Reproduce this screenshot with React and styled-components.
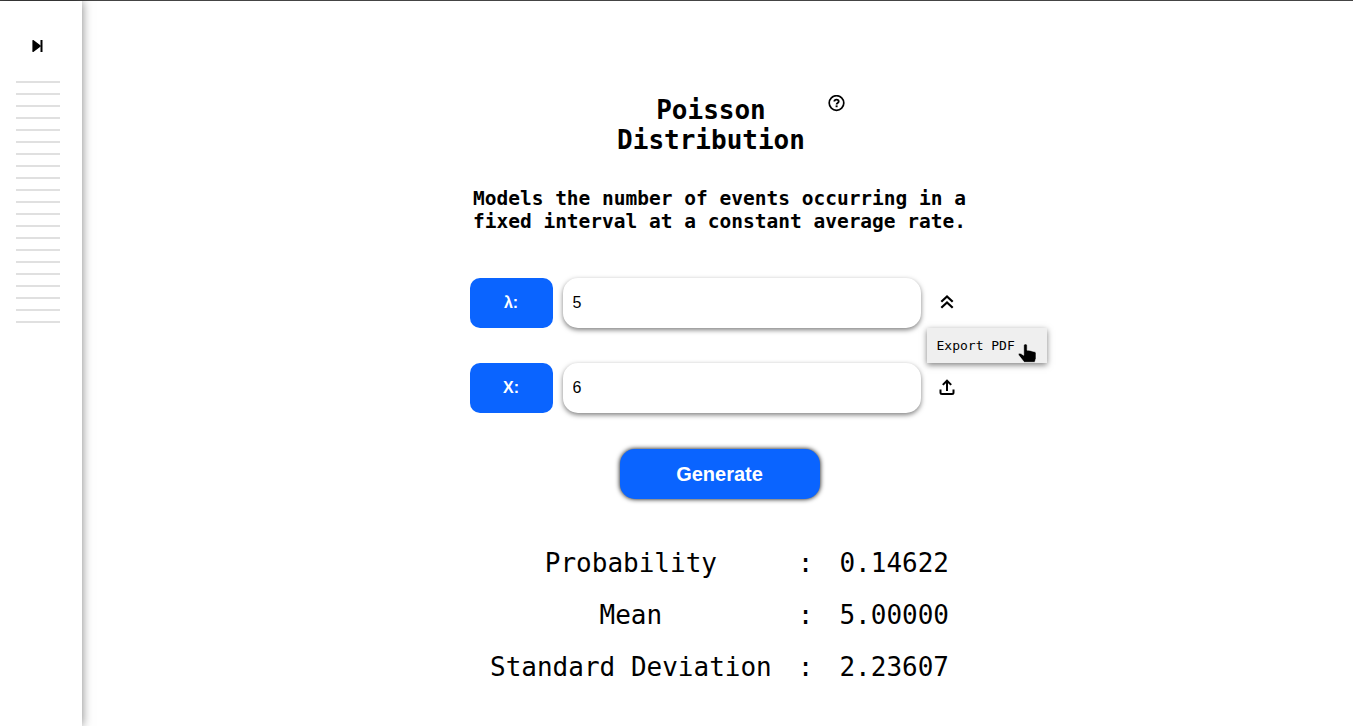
import { useState } from "react";
import styled, { createGlobalStyle } from "styled-components";

const results = [
  { label: "Probability", value: "0.14622" },
  { label: "Mean", value: "5.00000" },
  { label: "Standard Deviation", value: "2.23607" },
];

const slots = Array.from({ length: 21 }, (_, i) => i);

export default function App() {
  const [lambda, setLambda] = useState("5");
  const [x, setX] = useState("6");

  return (
    <>
      <GlobalStyle />
      <Page>
        <Sidebar>
          <IconButton aria-label="Open menu">
            <svg width="12" height="12" viewBox="0 0 12 12">
              <path d="M1 0.6v10.8L8.300 6z" fill="#000" stroke="#000" strokeWidth="1.200" strokeLinejoin="round" />
              <path d="M9.500 0v12" stroke="#000" strokeWidth="2" />
            </svg>
          </IconButton>
          <SlotList>
            {slots.map((slot) => (
              <Slot key={slot} />
            ))}
          </SlotList>
        </Sidebar>

        <Main>
          <TitleRow>
            <Title>Poisson Distribution</Title>
            <IconButton aria-label="Help">
              <svg width="17" height="17" viewBox="0 0 17 17" fill="none" stroke="#000">
                <circle cx="8.5" cy="8" r="7.3" strokeWidth="1.7" />
                <path d="M6.3 6.5C6.4 5.200 7.3 4.600 8.5 4.600s2.2.7 2.2 1.800c0 1.500-2.1 1.500-2.1 3" strokeWidth="1.800" />
                <path d="M8.6 10.400v1.800" strokeWidth="2" />
              </svg>
            </IconButton>
          </TitleRow>

          <Description>
            Models the number of events occurring in a fixed interval at a constant average rate.
          </Description>

          <Form onSubmit={(e) => e.preventDefault()}>
            <Fields>
              <Field>
                <FieldLabel htmlFor="lambda">λ:</FieldLabel>
                <FieldInput id="lambda" value={lambda} onChange={(e) => setLambda(e.target.value)} />
                <FieldAction>
                  <IconButton type="button" aria-label="Close export menu">
                    <svg width="18" height="18" viewBox="0 0 18 18" fill="none" stroke="#000" strokeWidth="2.2">
                      <path d="M3.300 7.800L9 2.400l5.700 5.400M3.300 13.800L9 8.400l5.700 5.400" />
                    </svg>
                  </IconButton>
                  <ExportMenu type="button">
                    Export PDF
                    <Pointer width="20" height="20" viewBox="0 0 20 20">
                      <path
                        d="M8.500 1c1 0 1.700.7 1.700 1.600v4.600h1.800l6 1.600c.8.3 1 .9 1 1.700v5l-1.200 3.800H7.200L1.300 11.800c-.2-1.300 1.400-2 2.700-1.200l2.700 1.700V2.600C6.700 1.700 7.500 1 8.500 1z"
                        fill="#000"
                        stroke="#fff"
                        strokeWidth="0.6"
                      />
                    </Pointer>
                  </ExportMenu>
                </FieldAction>
              </Field>
              <Field>
                <FieldLabel htmlFor="x">X:</FieldLabel>
                <FieldInput id="x" value={x} onChange={(e) => setX(e.target.value)} />
                <FieldAction>
                  <IconButton type="button" aria-label="Export">
                    <svg width="18" height="18" viewBox="0 0 18 18" fill="none" stroke="#000" strokeWidth="2">
                      <path d="M9 12V2M4.800 5.900L9 1.700l4.200 4.200M2.500 10.500v3c0 1 .5 1.500 1.500 1.500h10c1 0 1.500-.5 1.500-1.500v-3" />
                    </svg>
                  </IconButton>
                </FieldAction>
              </Field>
            </Fields>
            <GenerateButton>Generate</GenerateButton>
          </Form>

          <Results>
            <tbody>
              {results.map(({ label, value }) => (
                <tr key={label}>
                  <ResultCell as="th" scope="row">{label}</ResultCell>
                  <ResultCell>:</ResultCell>
                  <ResultCell>{value}</ResultCell>
                </tr>
              ))}
            </tbody>
          </Results>
        </Main>
      </Page>
    </>
  );
}

const GlobalStyle = createGlobalStyle`
  * {
    box-sizing: border-box;
  }

  body {
    margin: 0;
    background-color: #fff;
    color: #000;
    font-family: "DejaVu Sans Mono", monospace;
    font-size: 13px;
  }
`;

const Page = styled.div`
  display: flex;
  min-height: 100vh;
  border-top: 1px solid #444;
`;

const Sidebar = styled.aside`
  display: flex;
  flex-direction: column;
  flex: 0 0 82px;
  padding: 39px 22px 0 16px;
  box-shadow: 0 0 10px rgba(0, 0, 0, 0.5);
`;

const IconButton = styled.button`
  display: flex;
  align-items: center;
  justify-content: center;
  padding: 0;
  border: none;
  background: none;
  cursor: pointer;
`;

const SlotList = styled.div`
  display: flex;
  flex-direction: column;
  gap: 10px;
  margin-top: 29px;
`;

const Slot = styled.hr`
  width: 100%;
  height: 2px;
  margin: 0;
  border: none;
  background-color: #e0e0e0;
`;

const Main = styled.main`
  display: flex;
  flex: 1;
  flex-direction: column;
  align-items: center;
  padding: 94px 0 32px 4px;
`;

const TitleRow = styled.header`
  display: flex;
  align-items: flex-start;
  width: 250px;
`;

const Title = styled.h1`
  flex: 1;
  margin: 0;
  font-size: 2em;
  line-height: 30px;
  text-align: center;
`;

const Description = styled.h2`
  width: 500px;
  margin: 32px 0 0;
  font-size: 1.5em;
  line-height: 23px;
  text-align: center;
`;

const Form = styled.form`
  display: flex;
  flex-direction: column;
  align-items: center;
  gap: 36px;
  width: 500px;
  margin-top: 45px;
`;

const Fields = styled.div`
  display: flex;
  flex-direction: column;
  gap: 35px;
  width: 100%;
`;

const Field = styled.div`
  display: flex;
  gap: 10px;
  height: 50px;
`;

const FieldLabel = styled.label`
  display: flex;
  align-items: center;
  justify-content: center;
  width: 83px;
  border-radius: 10px;
  background-color: #0a64ff;
  color: #fff;
  font: bold 16px "Liberation Sans", sans-serif;
`;

const FieldInput = styled.input`
  width: 358px;
  padding: 0 10px;
  border: none;
  border-radius: 15px;
  outline: none;
  background-color: #fff;
  box-shadow: 0 2px 5px rgba(0, 0, 0, 0.5);
  font: 16px "Liberation Sans", sans-serif;
`;

const FieldAction = styled.div`
  position: relative;
  display: flex;
  align-items: center;
  justify-content: center;
  width: 33px;
`;

const ExportMenu = styled.button`
  position: absolute;
  top: 50px;
  left: -4px;
  width: 120px;
  height: 35px;
  padding: 0 10px;
  border: none;
  background-color: #efefef;
  box-shadow: 0 2px 6px rgba(0, 0, 0, 0.5);
  font: 13px "DejaVu Sans Mono", monospace;
  text-align: left;
  cursor: pointer;
`;

const Pointer = styled.svg`
  position: absolute;
  right: 10px;
  bottom: 0;
`;

const GenerateButton = styled.button`
  width: 200px;
  height: 50px;
  border: none;
  border-radius: 15px;
  background-color: #0a64ff;
  box-shadow: 0 0 5px #000;
  color: #fff;
  font: bold 20px "Liberation Sans", sans-serif;
  cursor: pointer;
`;

const Results = styled.table`
  margin-top: 38px;
  border-collapse: collapse;
  font-size: 2em;
  line-height: 30px;
  text-align: center;
`;

const ResultCell = styled.td`
  padding: 11px 13px;
  font-weight: normal;
`;
